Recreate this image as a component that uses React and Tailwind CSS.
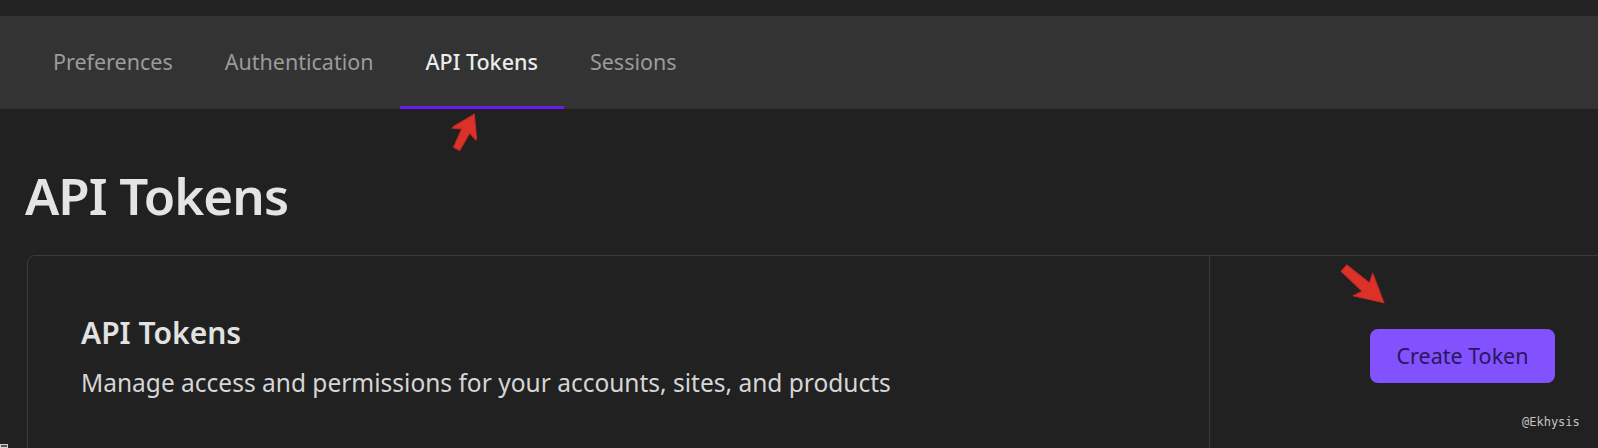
// Onglets de la page de réglages
const tabs = [
    { label: "Preferences", id: "preferences" },
    { label: "Authentication", id: "authentication" },
    { label: "API Tokens", id: "tokens", active: true },
    { label: "Sessions", id: "sessions" },
];

// Flèche rouge d'annotation, dessinée pointe vers le haut puis tournée
function RedArrow({ className, length, head, width, tail, angle }) {
    const w = head + 4;
    const h = length + 4;
    const cx = w / 2;
    const points = [
        [cx, 2],
        [cx + width / 2, 2 + head],
        [cx + tail / 2, 2 + head - 4],
        [cx + tail / 2.6, 2 + length],
        [cx - tail / 2.6, 2 + length],
        [cx - tail / 2, 2 + head - 4],
        [cx - width / 2, 2 + head],
    ].map((p) => p.join(",")).join(" ");
    return (
        <svg className={className} width={w} height={h} viewBox={`0 0 ${w} ${h}`} style={{ transform: `rotate(${angle}deg)` }}>
            <polygon points={points} fill="#dc3129" stroke="#c82a24" strokeWidth="1" strokeLinejoin="round" />
        </svg>
    );
}

export default function App() {
    return (
        <div className="relative w-[1598px] h-[448px] overflow-hidden bg-[#212121] font-['Noto_Sans',sans-serif]">
            <div className="h-[16px] bg-[#232323]"></div>

            <nav className="flex h-[93px] bg-[#333333] pl-[27px]">
                {tabs.map((tab) => (
                    <div
                        key={tab.id}
                        className={
                            tab.active
                                ? "flex items-center px-[26px] pt-[3px] border-b-[3px] border-[#6b1cf2] text-[21.5px] font-medium text-[#ececec]"
                                : "flex items-center px-[26px] pt-[3px] border-b-[3px] border-transparent text-[21.5px] text-[#9b9b9b]"
                        }
                    >
                        {tab.label}
                    </div>
                ))}
            </nav>

            <main className="pl-[25px] pt-[61px]">
                <h1 className="text-[51px] leading-none font-semibold text-[#e4e4e4] tracking-[-0.9px]">API Tokens</h1>

                <section className="mt-[34px] ml-[2px] flex w-[1700px] h-[300px] rounded-tl-[8px] border border-[#3a3a3a]">
                    <div className="w-[1182px] border-r border-[#3a3a3a] pl-[53px] pt-[62px]">
                        <h2 className="text-[30px] leading-none font-semibold text-[#e2e2e2]">API Tokens</h2>
                        <p className="mt-[23px] text-[24.5px] leading-none text-[#d6d6d6]">
                            Manage access and permissions for your accounts, sites, and products
                        </p>
                    </div>
                    <div className="pl-[160px] pt-[73px]">
                        <button className="w-[185px] h-[54px] rounded-[8px] bg-[#8152fd] text-[21.5px] text-[#2c1560]">
                            Create Token
                        </button>
                    </div>
                </section>
            </main>

            <RedArrow className="absolute left-[452px] top-[110px]" length={39} head={23} width={29} tail={9} angle={27} />
            <RedArrow className="absolute left-[1348px] top-[257px]" length={53} head={28} width={30} tail={11} angle={131} />

            <span className="absolute left-[1522px] top-[413px] font-['DejaVu_Sans_Mono',monospace] text-[12px] text-[#c4c4c4]">
                @Ekhysis
            </span>

            <div className="absolute left-0 bottom-0 w-[8px] h-[4px] border border-[#cfcfcf] bg-[#555]"></div>
        </div>
    );
}
